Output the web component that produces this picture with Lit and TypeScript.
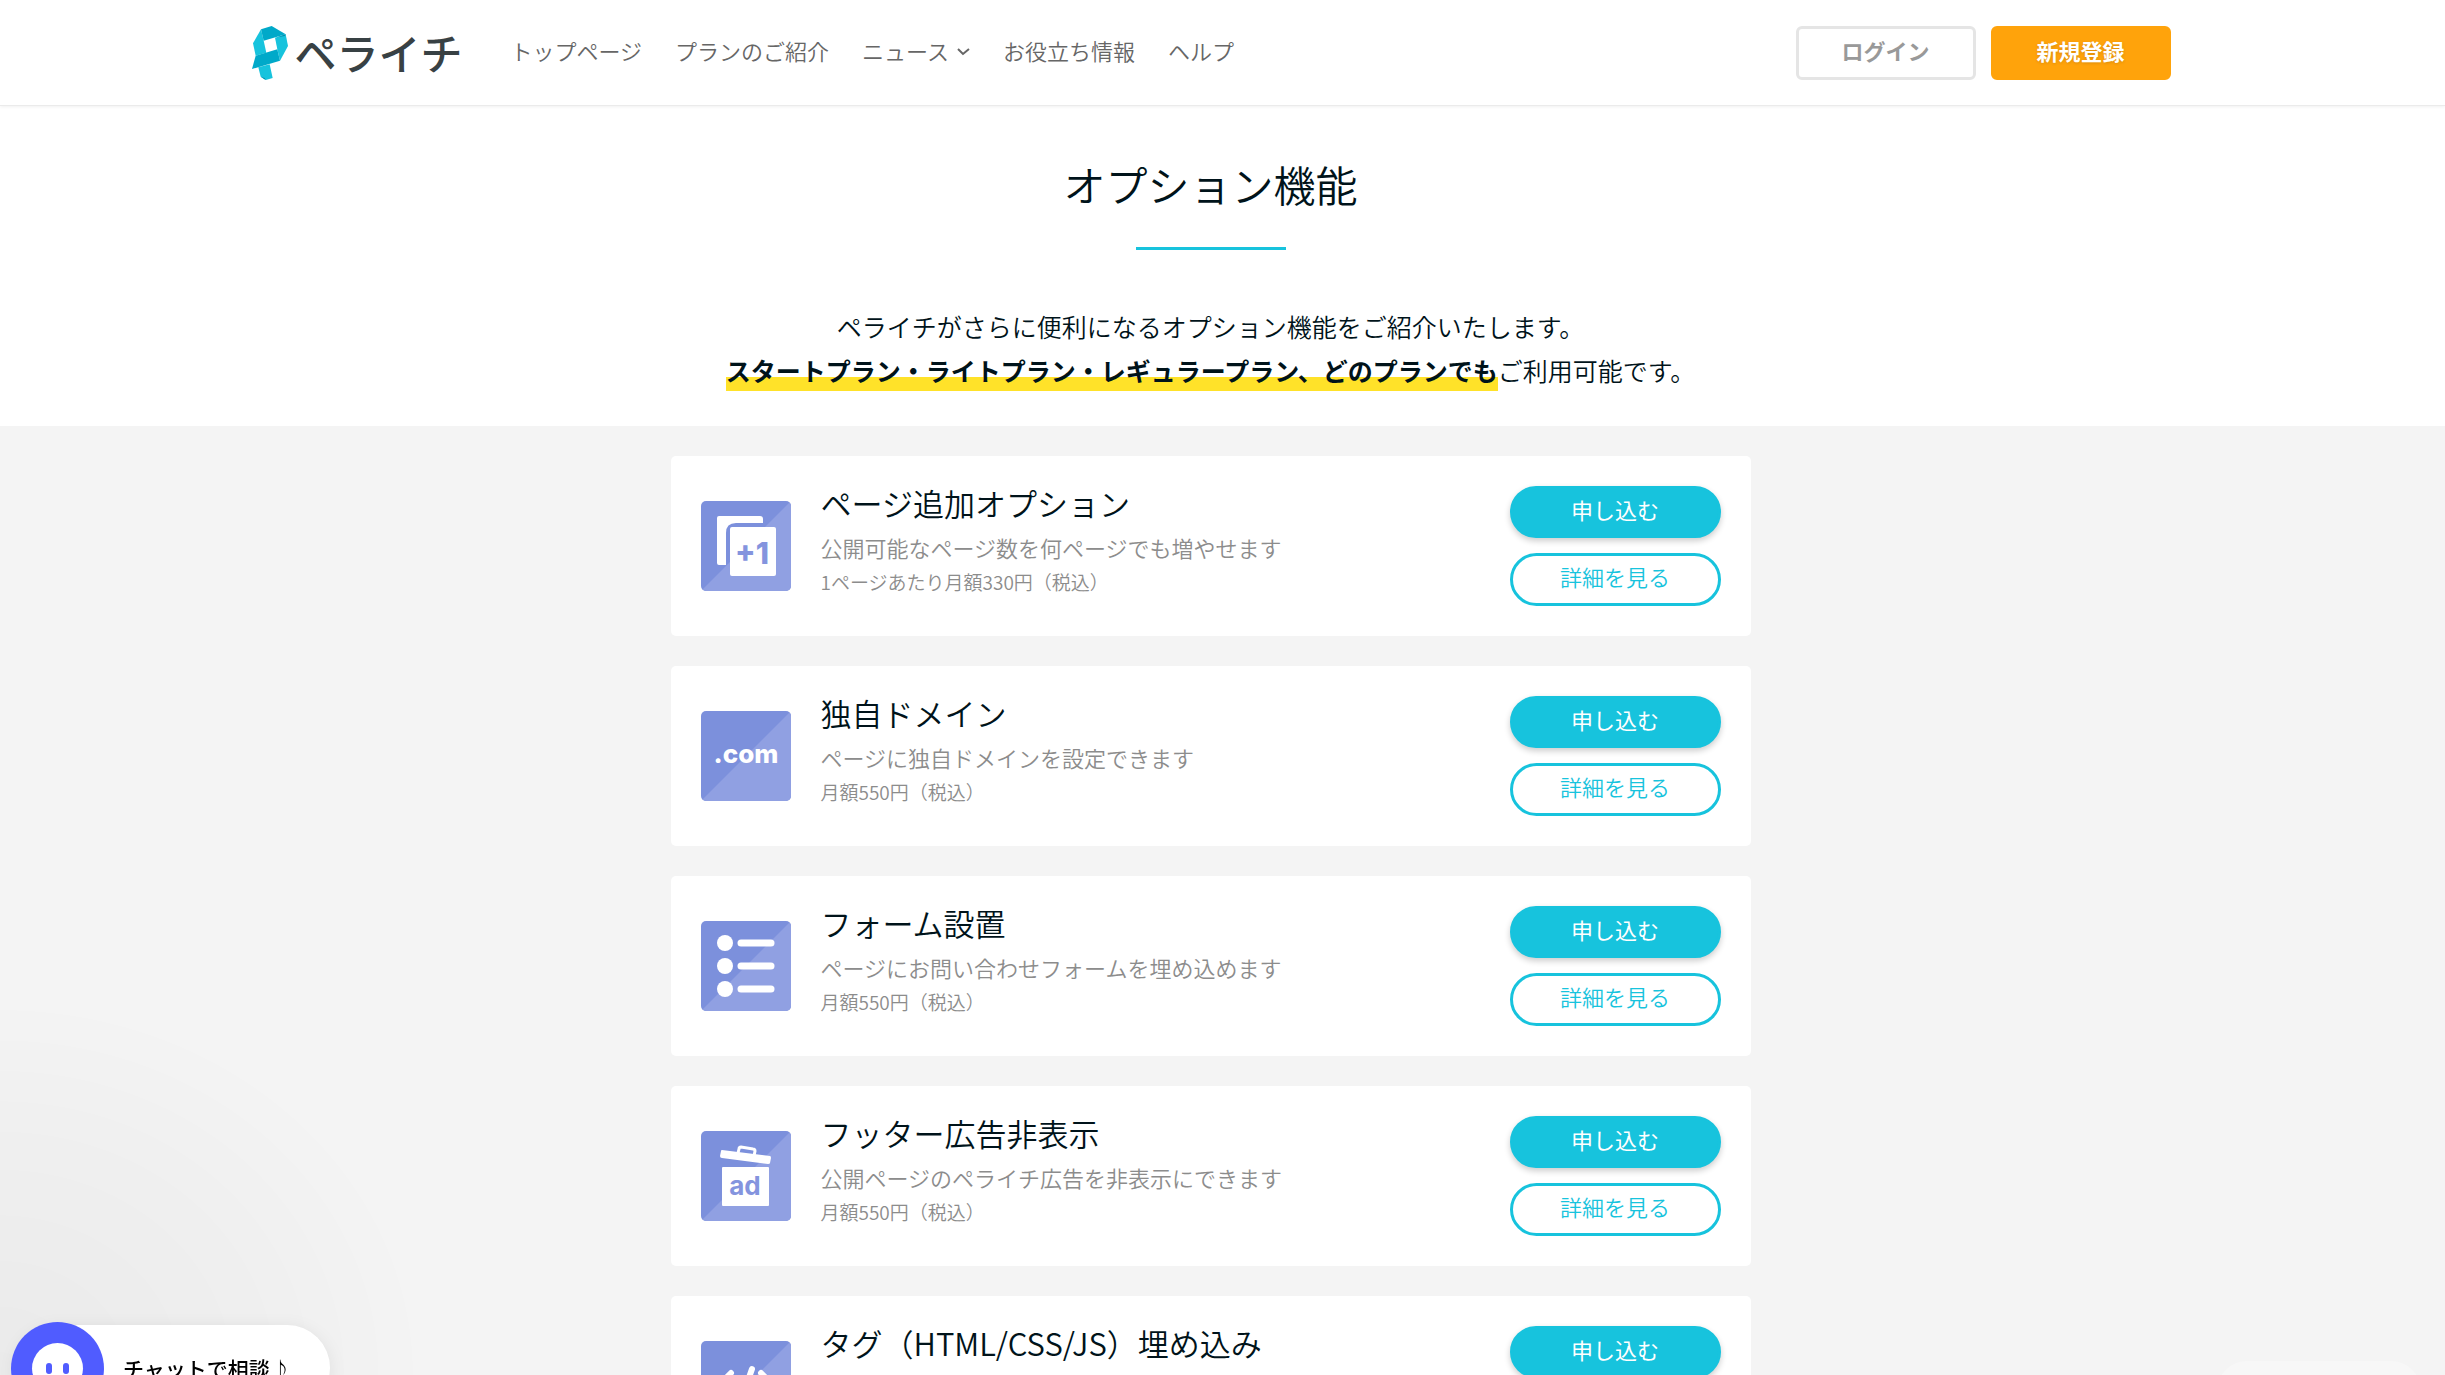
import { LitElement, html, css, svg, type TemplateResult, type SVGTemplateResult } from "lit";
import { customElement } from "lit/decorators.js";

interface Option {
  title: string;
  text: string;
  price: string;
  icon: SVGTemplateResult;
}

const pages = svg`
  <path d="M18 15H59Q62 15 62 18V22H35Q25 22 25 32V64H18Q16 64 16 62V17Q16 15 18 15Z" fill="#fff"/>
  <rect x="29" y="26" width="46" height="49" rx="2" fill="#fff"/>
  <text x="51" y="63" text-anchor="middle" font-family="Inter, sans-serif" font-weight="800" font-size="30" fill="#8494de">+1</text>`;

const domain = svg`
  <text x="45" y="52" text-anchor="middle" font-family="Inter, sans-serif" font-weight="800" font-size="26" fill="#fff">.com</text>`;

const form = svg`
  ${[22, 45, 68].map(
    (y) => svg`<circle cx="24" cy=${y} r="8" fill="#fff"/>
      <path d="M40 ${y}H70" stroke="#fff" stroke-width="7" stroke-linecap="round"/>`
  )}`;

const trash = svg`
  <rect x="21" y="36" width="47" height="39" rx="1" fill="#fff"/>
  <path d="M21 19L69 25Q70 25 70 27L69 32Q69 33 67 33L21 27Q19 27 19 25L20 20Q20 19 21 19Z" fill="#fff"/>
  <path d="M37 22L38 18Q38 16 40 16L52 18Q54 18 54 20L53 25" fill="none" stroke="#fff" stroke-width="3"/>
  <text x="44" y="64" text-anchor="middle" font-family="Inter, sans-serif" font-weight="700" font-size="26" fill="#8494de">ad</text>`;

const code = svg`
  <path d="M30 32L17 45L30 58M51 28L39 62M60 32L73 45L60 58" fill="none" stroke="#fff" stroke-width="6" stroke-linecap="round" stroke-linejoin="round"/>`;

const options: Option[] = [
  { title: "ページ追加オプション", text: "公開可能なページ数を何ページでも増やせます", price: "1ページあたり月額330円（税込）", icon: pages },
  { title: "独自ドメイン", text: "ページに独自ドメインを設定できます", price: "月額550円（税込）", icon: domain },
  { title: "フォーム設置", text: "ページにお問い合わせフォームを埋め込めます", price: "月額550円（税込）", icon: form },
  { title: "フッター広告非表示", text: "公開ページのペライチ広告を非表示にできます", price: "月額550円（税込）", icon: trash },
  { title: "タグ（HTML/CSS/JS）埋め込み", text: "ページにタグを埋め込めます", price: "月額550円（税込）", icon: code },
];

@customElement("site-header")
export class SiteHeader extends LitElement {
  static styles = css`
    :host {
      display: block;
      background: #fff;
      border-bottom: 1px solid #ebebeb;
      box-shadow: 0 1px 3px rgba(0, 0, 0, 0.06);
      position: relative;
    }
    .bar {
      display: flex;
      align-items: center;
      box-sizing: border-box;
      width: 100%;
      max-width: 1920px;
      height: 105px;
      margin: 0 auto;
    }
    a {
      color: inherit;
      text-decoration: none;
    }
    .logo {
      display: flex;
      align-items: center;
      gap: 6px;
      margin-right: 48px;
      color: #384144;
      font-size: 42px;
      font-weight: 500;
      line-height: 54px;
    }
    .name {
      padding-bottom: 2px;
    }
    .nav {
      display: flex;
      gap: 33px;
      flex: 1;
      color: #666;
      font-size: 22px;
      line-height: 30px;
      padding-bottom: 6px;
    }
    .more {
      display: flex;
      align-items: center;
      gap: 8px;
    }
    .chevron {
      margin-top: 4px;
    }
    .actions {
      display: flex;
      gap: 15px;
      font-size: 22px;
      font-weight: 700;
    }
    .btn {
      box-sizing: border-box;
      width: 180px;
      height: 54px;
      border: 3px solid #e5e5e5;
      border-radius: 6px;
      color: #999;
      line-height: 42px;
      text-align: center;
    }
    .primary {
      border-color: #ffa30b;
      background: #ffa30b;
      color: #fff;
      text-shadow: 0 1px 3px rgba(0, 0, 0, 0.15);
    }
  `;

  render(): TemplateResult {
    return html`
      <div class="bar">
        <a class="logo" href="#">
          <svg width="38" height="54" viewBox="57 78 112 162" aria-hidden="true">
            <path d="M86 88L62 130L70 167L102 158L94 122Z" fill="#17c3dd" />
            <path d="M128 113L160 103L167 138L143 182L135 148Z" fill="#17c3dd" />
            <path d="M78 202L112 193L121 234L100 240L85 230Z" fill="#17c3dd" />
            <path d="M86 88L118 78L160 103L94 122Z" fill="#00a9c9" />
            <path d="M70 167L135 148L143 182L59 207Z" fill="#00a9c9" />
            <path d="M86 88L89 101L94 122Z M134 112L160 103L158 108Z M85 230L100 240L97 234Z" fill="#008fae" />
          </svg>
          <span class="name">ペライチ</span>
        </a>
        <nav class="nav">
          <a href="#">トップページ</a>
          <a href="#">プランのご紹介</a>
          <a class="more" href="#">ニュース<svg class="chevron" width="13" height="9" viewBox="0 0 13 9" aria-hidden="true"><path d="M1 2L6 7L12 2" fill="none" stroke="#666" stroke-width="2" /></svg></a>
          <a href="#">お役立ち情報</a>
          <a href="#">ヘルプ</a>
        </nav>
        <div class="actions">
          <a class="btn" href="#">ログイン</a>
          <a class="btn primary" href="#">新規登録</a>
        </div>
      </div>
    `;
  }
}

@customElement("option-card")
export class OptionCard extends LitElement {
  static properties = { option: { attribute: false } };
  declare option: Option;

  static styles = css`
    :host {
      display: flex;
      align-items: center;
      gap: 30px;
      box-sizing: border-box;
      height: 180px;
      padding: 30px;
      border-radius: 5px;
      background: #fff;
    }
    .icon {
      display: block;
      flex: none;
      border-radius: 5px;
    }
    .body {
      flex: 1;
      align-self: flex-start;
      color: #8c8c8c;
    }
    .title {
      margin: 0 0 9px;
      color: #00131a;
      font-size: 31px;
      font-weight: inherit;
      line-height: 33px;
    }
    .text,
    .price {
      margin: 0;
      font-size: 22px;
      line-height: 38px;
    }
    .price {
      font-size: 19px;
      line-height: 32px;
    }
    .actions {
      display: flex;
      flex-direction: column;
      gap: 15px;
      width: 211px;
    }
    .btn {
      box-sizing: border-box;
      height: 53px;
      border: 3px solid #17c3dd;
      border-radius: 27px;
      background: #fff;
      color: #17c3dd;
      font-size: 22px;
      line-height: 41px;
      text-align: center;
      text-decoration: none;
    }
    .apply {
      height: 52px;
      background: #17c3dd;
      color: #fff;
      font-weight: 400;
      box-shadow: 0 3px 6px rgba(0, 0, 0, 0.2);
    }
  `;

  render(): TemplateResult {
    const o = this.option;
    return html`
      <svg class="icon" width="90" height="90" viewBox="0 0 90 90" aria-hidden="true">
        <rect width="90" height="90" fill="#7c90dc" />
        <path d="M90 0V90H0Z" fill="#90a0e2" />
        ${o.icon}
      </svg>
      <div class="body">
        <h2 class="title">${o.title}</h2>
        <p class="text">${o.text}</p>
        <p class="price">${o.price}</p>
      </div>
      <div class="actions">
        <a class="btn apply" href="#">申し込む</a>
        <a class="btn" href="#">詳細を見る</a>
      </div>
    `;
  }
}

@customElement("chat-launcher")
export class ChatLauncher extends LitElement {
  static styles = css`
    :host {
      position: fixed;
      left: 11px;
      bottom: -40px;
      z-index: 2;
    }
    .glow {
      position: fixed;
      left: 0;
      bottom: 0;
      width: 440px;
      height: 400px;
      background: radial-gradient(ellipse 430px 380px at 0 100%, rgba(0, 0, 0, 0.04), rgba(0, 0, 0, 0.02) 60%, transparent);
      pointer-events: none;
    }
    .chat {
      position: relative;
      display: flex;
      align-items: center;
      gap: 19px;
      height: 93px;
      padding: 0 39px 0 0;
      border: 0;
      background: none;
      color: #000;
      font-family: inherit;
      font-size: 21px;
      font-weight: 500;
      line-height: 30px;
    }
    .chat::before {
      content: "";
      position: absolute;
      inset: 3px 0 4px 4px;
      border-radius: 43px;
      background: #fff;
      box-shadow: 0 3px 18px rgba(0, 0, 0, 0.08);
    }
    .face,
    .label {
      position: relative;
    }
    .label {
      padding-bottom: 2px;
    }
  `;

  render(): TemplateResult {
    return html`
      <div class="glow"></div>
      <button class="chat" type="button">
        <svg class="face" width="93" height="93" viewBox="0 0 93 93" aria-hidden="true">
          <circle cx="46.5" cy="46.5" r="46.5" fill="#505cff" />
          <circle cx="46.5" cy="46.5" r="25.5" fill="#fff" />
          <rect x="35" y="41" width="6" height="11" rx="3" fill="#505cff" />
          <rect x="52" y="41" width="6" height="11" rx="3" fill="#505cff" />
        </svg>
        <span class="label">チャットで相談♪</span>
      </button>
    `;
  }
}

@customElement("app-root")
export class AppRoot extends LitElement {
  static styles = css`
    :host {
      display: block;
      min-height: 100vh;
      background: #f4f4f4;
      color: #00131a;
      font-family: "Noto Sans CJK JP", "Noto Sans", sans-serif;
      font-weight: 350;
    }
    .header,
    .intro,
    .list {
      padding-right: 24px;
    }
    .intro {
      padding-top: 48px;
      padding-bottom: 34px;
      background: #fff;
      text-align: center;
    }
    .heading {
      margin: 0;
      font-size: 42px;
      font-weight: inherit;
      line-height: 60px;
    }
    .heading::after {
      content: "";
      display: block;
      width: 150px;
      height: 3px;
      margin: 33px auto 54px;
      background: #17c3dd;
    }
    .lead {
      margin: 0;
      font-size: 25px;
      line-height: 44px;
    }
    .mark {
      padding-bottom: 3px;
      background: linear-gradient(to top, #ffe229 14px, transparent 14px);
      font-weight: 700;
    }
    .list {
      display: grid;
      grid-template-columns: minmax(0, 1080px);
      justify-content: center;
      gap: 30px;
      padding-top: 30px;
      padding-bottom: 30px;
    }
    .top {
      position: fixed;
      right: 24px;
      bottom: -46px;
      width: 204px;
      height: 60px;
      border-radius: 30px;
      background: rgba(255, 255, 255, 0.3);
    }
  `;

  render(): TemplateResult {
    return html`
      <site-header class="header"></site-header>
      <main>
        <section class="intro">
          <h1 class="heading">オプション機能</h1>
          <p class="lead">
            ペライチがさらに便利になるオプション機能をご紹介いたします。<br />
            <strong class="mark">スタートプラン・ライトプラン・レギュラープラン、どのプランでも</strong>ご利用可能です。
          </p>
        </section>
        <section class="list">
          ${options.map((o) => html`<option-card .option=${o}></option-card>`)}
        </section>
      </main>
      <div class="top"></div>
      <chat-launcher></chat-launcher>
    `;
  }
}
